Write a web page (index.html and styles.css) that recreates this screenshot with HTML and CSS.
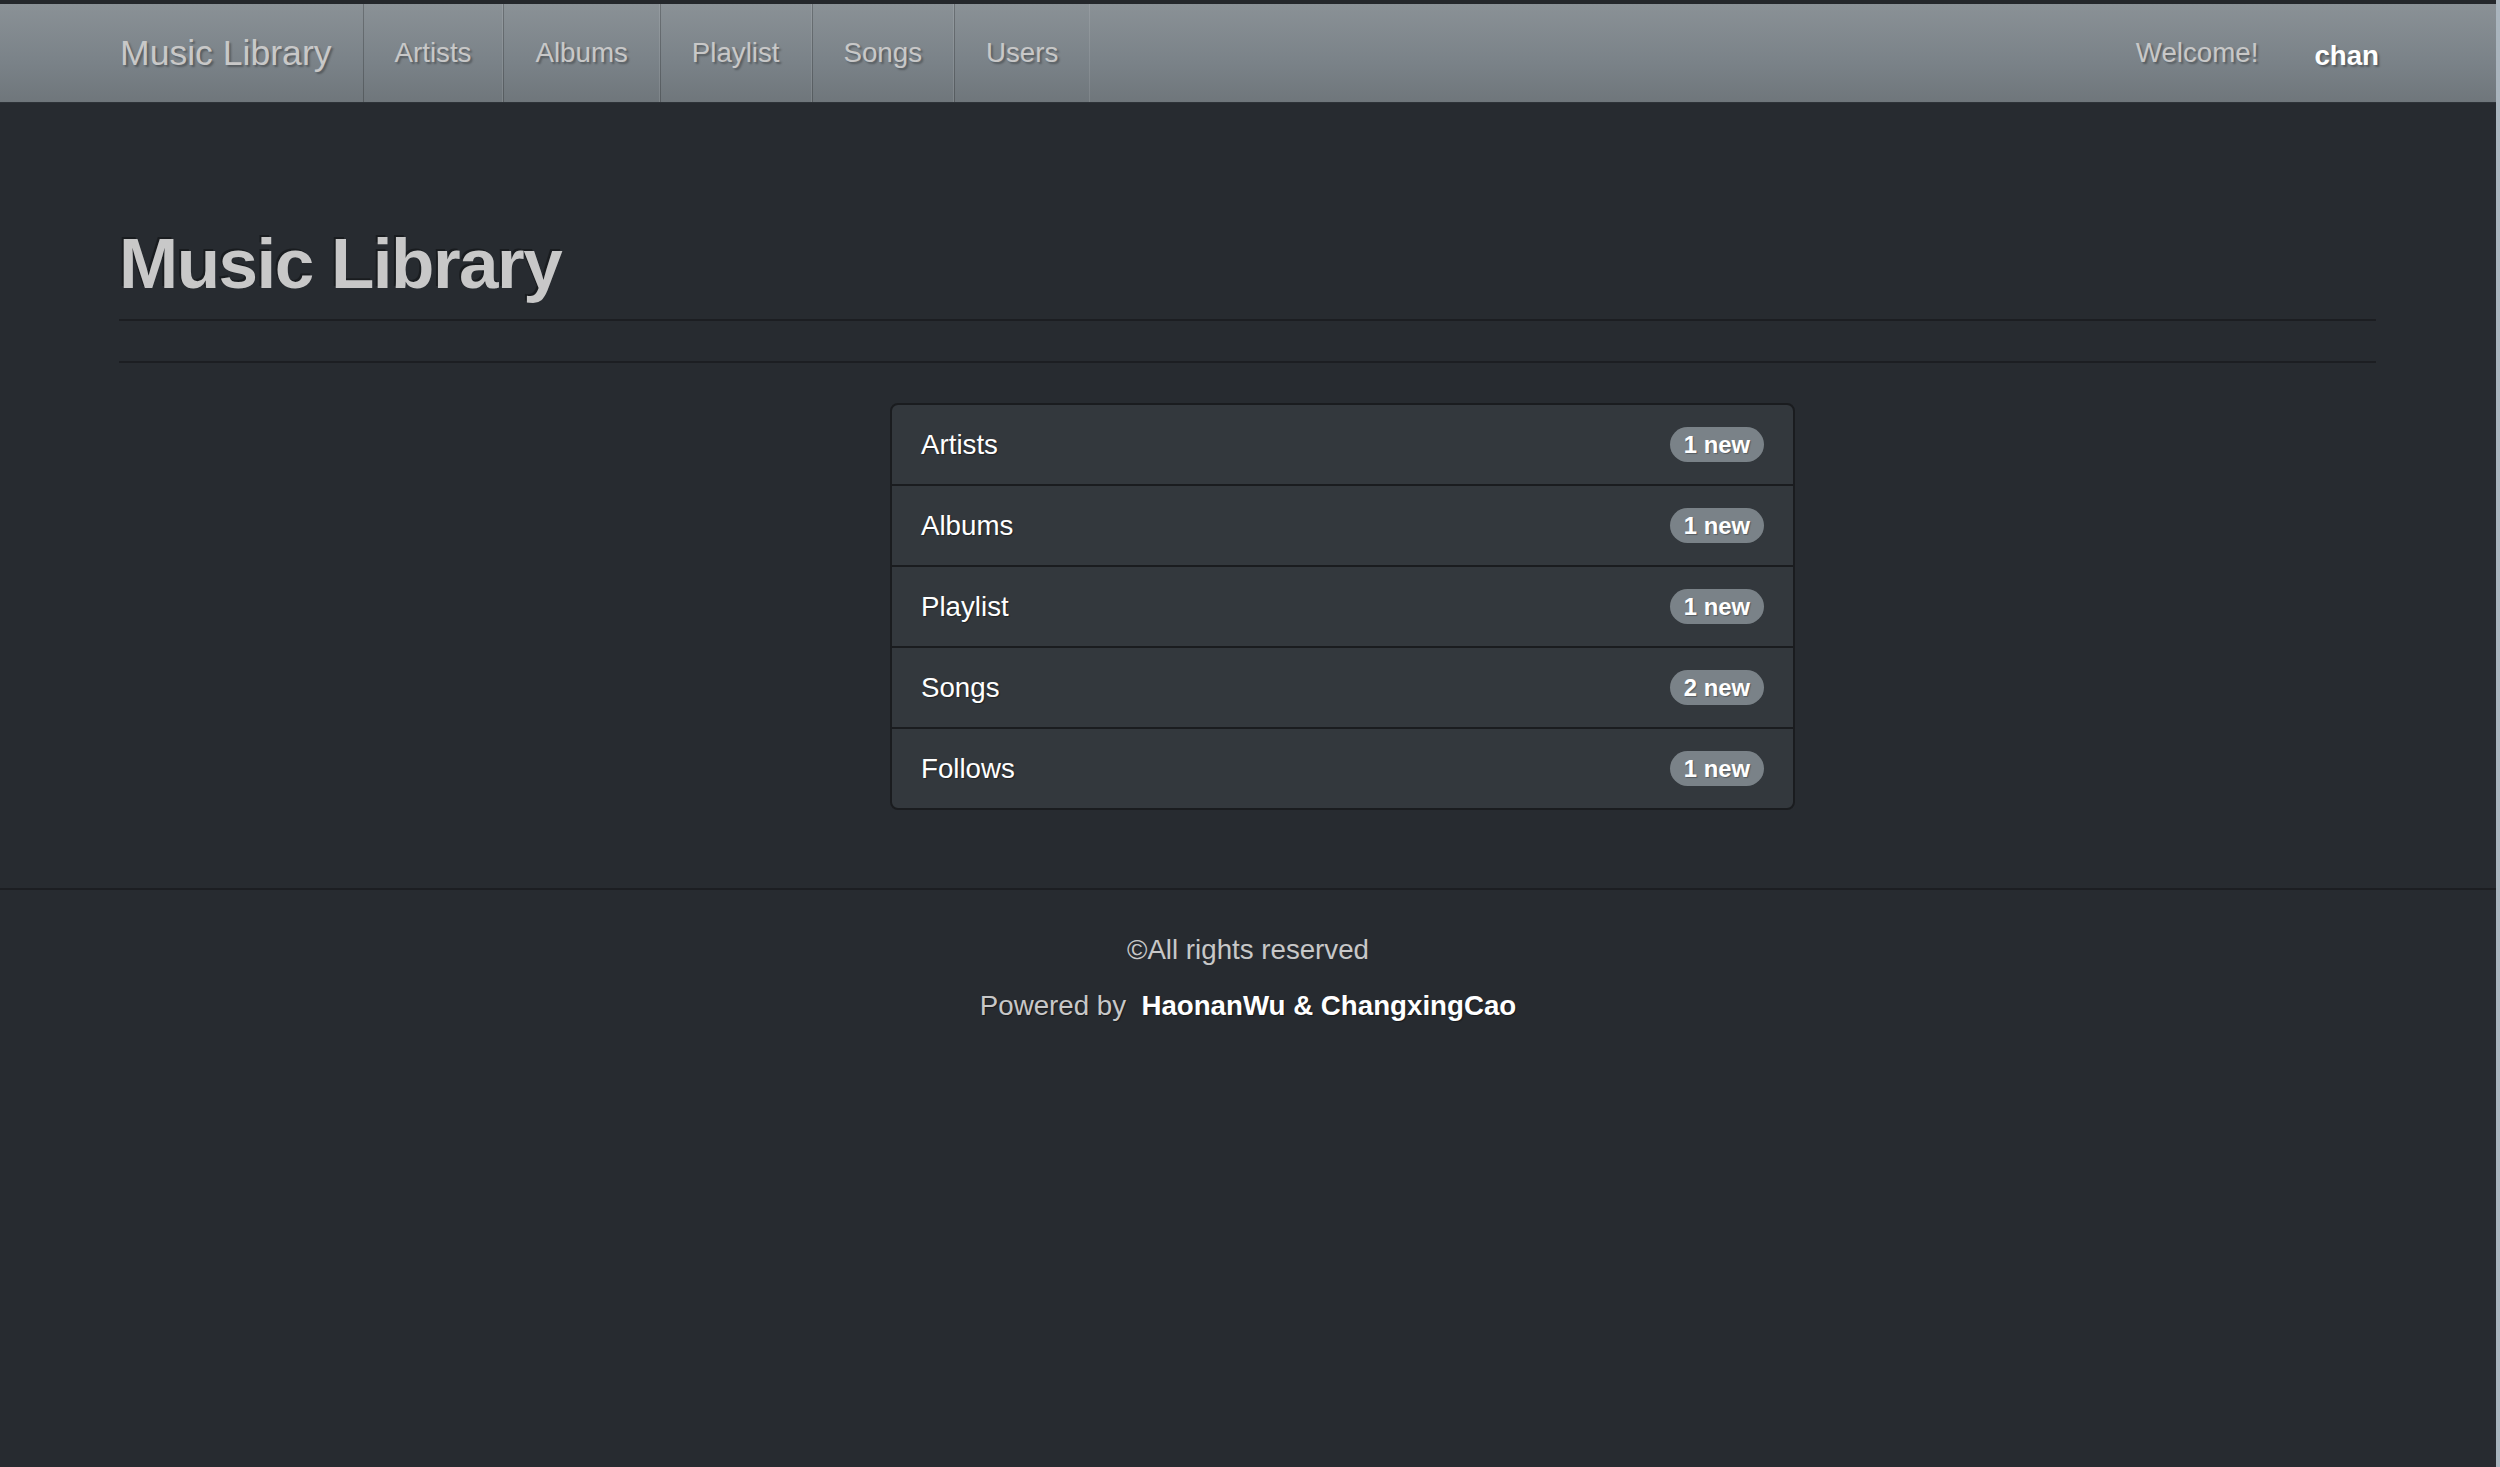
FILE: index.html
```html
<!DOCTYPE html>
<html lang="en">
<head>
<meta charset="utf-8">
<title>Music Library</title>
<link rel="stylesheet" href="styles.css">
</head>
<body>
<div class="page">
  <header class="navbar">
    <div class="nav-left">
      <a class="brand" href="#">Music Library</a>
      <ul class="nav">
        <li><a href="#">Artists</a></li>
        <li><a href="#">Albums</a></li>
        <li><a href="#">Playlist</a></li>
        <li><a href="#">Songs</a></li>
        <li><a href="#">Users</a></li>
      </ul>
    </div>
    <div class="nav-right">
      <span class="welcome">Welcome!</span>
      <a class="user" href="#">chan</a>
    </div>
  </header>

  <main class="container">
    <h1 class="page-header">Music Library</h1>
    <hr class="rule">
    <ul class="list-group">
      <li class="list-item"><span>Artists</span><span class="badge">1 new</span></li>
      <li class="list-item"><span>Albums</span><span class="badge">1 new</span></li>
      <li class="list-item"><span>Playlist</span><span class="badge">1 new</span></li>
      <li class="list-item"><span>Songs</span><span class="badge">2 new</span></li>
      <li class="list-item"><span>Follows</span><span class="badge">1 new</span></li>
    </ul>
  </main>

  <footer class="footer">
    <p class="rights">©All rights reserved</p>
    <p class="powered">Powered by&nbsp; <strong>HaonanWu &amp; ChangxingCao</strong></p>
  </footer>
</div>
</body>
</html>
```
FILE: styles.css
```css
html {
  background: #272b30;
}
body {
  margin: 0;
  min-height: 1467px;
  background: #272b30;
  border-right: 4px solid #a9b4bd;
  font-family: "Liberation Sans", Arial, Helvetica, sans-serif;
  color: #c8c8c8;
  box-sizing: border-box;
}
.page {
  width: 2496px;
}
a {
  text-decoration: none;
}

/* navbar */
.navbar {
  display: flex;
  justify-content: space-between;
  align-items: stretch;
  height: 98px;
  border-top: 4px solid #24272b;
  border-bottom: 1px solid #2e3338;
  background: linear-gradient(#8a9196, #7a8288 60%, #6f767b);
  padding: 0 117px 0 89px;
}
.nav-left {
  display: flex;
  align-items: stretch;
}
.brand {
  display: flex;
  align-items: center;
  padding: 0 31px;
  font-size: 35.6px;
  color: #c8c8c8;
  text-shadow: 2px 2px 2px rgba(0, 0, 0, 0.3);
}
.nav {
  display: flex;
  margin: 0;
  padding: 0;
  list-style: none;
}
.nav li {
  display: flex;
  border-left: 1px solid rgba(0, 0, 0, 0.22);
  border-right: 1px solid rgba(255, 255, 255, 0.1);
}
.nav a {
  display: flex;
  align-items: center;
  padding: 0 31px;
  font-size: 27.7px;
  color: #c8c8c8;
  text-shadow: 2px 2px 2px rgba(0, 0, 0, 0.3);
}
.nav-right {
  display: flex;
  align-items: center;
  gap: 56px;
  font-size: 27.7px;
}
.welcome {
  color: #c8c8c8;
  text-shadow: 2px 2px 2px rgba(0, 0, 0, 0.3);
}
.user {
  color: #fff;
  font-weight: bold;
  margin-top: 5px;
  text-shadow: 2px 2px 2px rgba(0, 0, 0, 0.3);
}

/* content */
.container {
  padding: 0 120px 0 119px;
}
.page-header {
  margin: 122px 0 0;
  padding: 0 0 16px;
  font-size: 71px;
  line-height: 78px;
  font-weight: bold;
  letter-spacing: -1.5px;
  color: #c8c8c8;
  text-shadow: -2px -2px 0 rgba(0, 0, 0, 0.35);
  border-bottom: 2px solid #1c1e22;
}
.rule {
  margin: 40px 0;
  border: 0;
  border-top: 2px solid #1c1e22;
  height: 0;
}
.list-group {
  margin: 0 0 0 771px;
  padding: 0;
  width: 905px;
  list-style: none;
}
.list-item {
  display: flex;
  justify-content: space-between;
  align-items: center;
  padding: 19px 29px;
  line-height: 41px;
  margin-bottom: -2px;
  background: #33383d;
  border: 2px solid #1a1c1f;
  font-size: 27.7px;
  color: #fff;
  text-shadow: 1px 1px 1px rgba(0, 0, 0, 0.4);
}
.list-item:first-child {
  border-radius: 8px 8px 0 0;
}
.list-item:last-child {
  border-radius: 0 0 8px 8px;
  margin-bottom: 0;
}
.badge {
  display: inline-block;
  padding: 6px 14px;
  font-size: 23.8px;
  font-weight: bold;
  line-height: 1;
  color: #fff;
  background: #7a8288;
  border-radius: 20px;
  text-shadow: 1px 1px 1px rgba(0, 0, 0, 0.3);
}

/* footer */
.footer {
  margin-top: 78px;
  border-top: 2px solid #1c1e22;
  padding-top: 40px;
  text-align: center;
  font-size: 27.7px;
  line-height: 40px;
}
.footer p {
  margin: 0 0 16px;
}
.rights {
  color: #c8c8c8;
}
.powered {
  color: #c8c8c8;
  text-shadow: 1px 1px 1px rgba(0, 0, 0, 0.4);
}
.powered strong {
  color: #fff;
}
```
